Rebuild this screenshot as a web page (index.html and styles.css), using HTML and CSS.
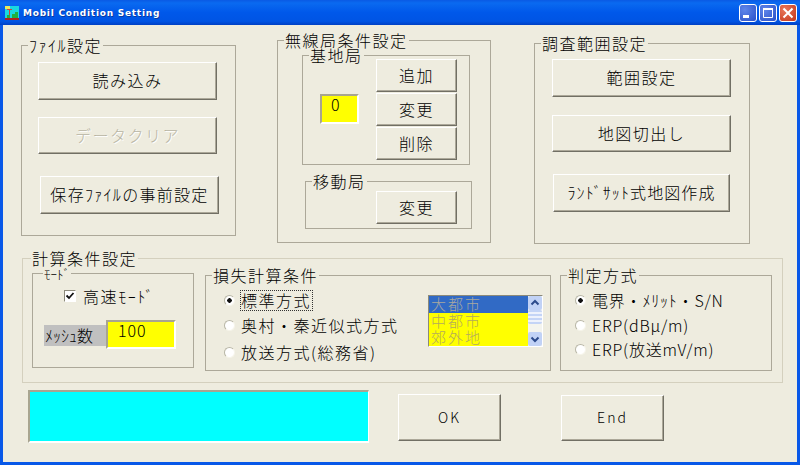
FILE: index.html
```html
<!DOCTYPE html>
<html lang="ja">
<head>
<meta charset="utf-8">
<title>Mobil Condition Setting</title>
<link rel="stylesheet" href="styles.css">
</head>
<body>
<div class="window">
  <header class="titlebar">
    <svg class="app-icon" width="14" height="14" viewBox="0 0 14 14">
      <rect width="14" height="14" fill="#19d8e0"/>
      <rect x="0" y="0" width="5" height="3" fill="#e8e860"/>
      <rect x="2" y="3" width="5" height="1" fill="#d04040"/>
      <rect x="4" y="4" width="1" height="5" fill="#d04040"/>
      <rect x="2" y="9" width="3" height="3" fill="#20b040"/>
      <rect x="7" y="8" width="3" height="4" fill="#20b040"/>
      <rect x="10" y="6" width="3" height="6" fill="#20b040"/>
      <rect x="0" y="12" width="14" height="2" fill="#b02020"/>
    </svg>
    <span class="title-text">Mobil Condition Setting</span>
    <div class="caption-buttons">
      <span class="cap cap-blue"><svg width="16" height="16" viewBox="0 0 16 16"><rect x="3" y="10" width="6" height="3" fill="#fff"/></svg></span>
      <span class="cap cap-blue"><svg width="16" height="16" viewBox="0 0 16 16"><path d="M3.5 3.5h9v9h-9z" fill="none" stroke="#fff"/><rect x="3" y="3" width="10" height="2" fill="#fff"/></svg></span>
      <span class="cap cap-red"><svg width="16" height="16" viewBox="0 0 16 16"><path d="M3.5 3.5l9 9M12.5 3.5l-9 9" stroke="#fff" stroke-width="2"/></svg></span>
    </div>
  </header>

  <main class="client">
    <div class="top-row">
      <section class="group file-group">
        <span class="legend">ﾌｧｲﾙ設定</span>
        <button class="btn btn-wide btn-read">読み込み</button>
        <button class="btn btn-wide btn-clear" disabled>データクリア</button>
        <button class="btn btn-wide btn-save">保存ﾌｧｲﾙの事前設定</button>
      </section>

      <section class="group radio-group">
        <span class="legend">無線局条件設定</span>
        <section class="group base-group">
          <span class="legend">基地局</span>
          <div class="field field-count">0</div>
          <div class="btn-stack">
            <button class="btn btn-small">追加</button>
            <button class="btn btn-small">変更</button>
            <button class="btn btn-small">削除</button>
          </div>
        </section>
        <section class="group mobile-group">
          <span class="legend">移動局</span>
          <button class="btn btn-small">変更</button>
        </section>
      </section>

      <section class="group survey-group">
        <span class="legend">調査範囲設定</span>
        <button class="btn btn-wide btn-range">範囲設定</button>
        <button class="btn btn-wide btn-cut">地図切出し</button>
        <button class="btn btn-wide btn-land">ﾗﾝﾄﾞｻｯﾄ式地図作成</button>
      </section>
    </div>

    <section class="group calc-group">
      <span class="legend">計算条件設定</span>
      <section class="group mode-group">
        <span class="legend legend-small">ﾓｰﾄﾞ</span>
        <label class="check-row"><span class="checkbox"><svg width="10" height="10" viewBox="0 0 10 10"><path d="M1.5 4.5l2.5 2.5L8.5 2" fill="none" stroke="#111" stroke-width="1.8"/></svg></span>高速ﾓｰﾄﾞ</label>
        <div class="mesh-row"><span class="mesh-label">ﾒｯｼｭ数</span><div class="field field-mesh">100</div></div>
      </section>

      <section class="group loss-group">
        <span class="legend">損失計算条件</span>
        <div class="radios loss-radios">
          <label class="radio-row"><span class="radio radio-on"></span><span class="focused">標準方式</span></label>
          <label class="radio-row"><span class="radio"></span><span>奥村・秦近似式方式</span></label>
          <label class="radio-row"><span class="radio"></span><span>放送方式(総務省)</span></label>
        </div>
        <div class="listbox">
          <ul class="list-items">
            <li class="list-selected">大都市</li>
            <li>中都市</li>
            <li>郊外地</li>
          </ul>
          <div class="scrollbar">
            <span class="sb-btn"><svg width="14" height="14" viewBox="0 0 14 14"><path d="M3.5 8.5L7 5l3.5 3.5" fill="none" stroke="#2c4a8c" stroke-width="2"/></svg></span>
            <span class="sb-thumb"></span>
            <span class="sb-btn sb-btn-end"><svg width="14" height="14" viewBox="0 0 14 14"><path d="M3.5 5.5L7 9l3.5-3.5" fill="none" stroke="#2c4a8c" stroke-width="2"/></svg></span>
          </div>
        </div>
      </section>

      <section class="group judge-group">
        <span class="legend">判定方式</span>
        <div class="radios judge-radios">
          <label class="radio-row"><span class="radio radio-on"></span><span>電界・ﾒﾘｯﾄ・S/N</span></label>
          <label class="radio-row"><span class="radio"></span><span>ERP(dBμ/m)</span></label>
          <label class="radio-row"><span class="radio"></span><span>ERP(放送mV/m)</span></label>
        </div>
      </section>
    </section>

    <div class="bottom-row">
      <div class="status-panel"></div>
      <button class="btn btn-ok">OK</button>
      <button class="btn btn-end">End</button>
    </div>
  </main>
</div>
</body>
</html>
```

FILE: styles.css
```css
* { box-sizing: border-box; }

html, body {
  margin: 0;
  padding: 0;
  width: 800px;
  height: 465px;
  overflow: hidden;
}

body {
  font-family: "Noto Sans CJK JP", "Liberation Sans", sans-serif;
  font-size: 16px;
  font-weight: 300;
  color: #000;
}

.window {
  width: 800px;
  height: 465px;
  display: flex;
  flex-direction: column;
  background: #0858e8;
  padding: 0 3px 3px;
}

.titlebar {
  height: 25px;
  margin: 0 -3px;
  padding: 0 3px 0 5px;
  display: flex;
  align-items: center;
  background: linear-gradient(180deg, #0a5ae4 0%, #0a6af0 12%, #0058ea 50%, #0054e4 85%, #0040c4 100%);
}

.app-icon { flex: none; }

.title-text {
  margin-left: 4px;
  font-family: "DejaVu Sans", sans-serif;
  font-size: 9px;
  font-weight: 700;
  letter-spacing: 0.75px;
  color: #fff;
  text-shadow: 1px 1px 0 #0a3aa0;
}

.caption-buttons {
  margin-left: auto;
  display: flex;
  gap: 2px;
}

.cap {
  width: 18px;
  height: 18px;
  border: 1px solid #fff;
  border-radius: 3px;
  display: block;
  overflow: hidden;
}

.cap svg { display: block; }

.cap-blue { background: radial-gradient(circle at 30% 30%, #5f86ea, #2a50c8); }
.cap-red { background: radial-gradient(circle at 30% 30%, #e8785a, #c4351a); }

.client {
  flex: 1;
  background: #eeecdf;
  display: flex;
  flex-direction: column;
}

.top-row {
  display: flex;
  align-items: flex-start;
  padding: 15px 0 0 18px;
  height: 218px;
}

.group {
  position: relative;
  border: 1px solid #aca899;
}

.legend {
  position: absolute;
  top: -8px;
  left: 6px;
  padding: 0 1px;
  background: #eeecdf;
  line-height: 14px;
  letter-spacing: 1.5px;
  white-space: nowrap;
}

.legend-small {
  font-size: 13px;
  letter-spacing: 0;
  left: 10px;
  top: -5px;
  line-height: 10px;
}

.file-group {
  width: 215px;
  height: 191px;
  margin-top: 5px;
  padding: 16px 0 0 16px;
}

.radio-group {
  width: 214px;
  height: 203px;
  margin-left: 41px;
  padding: 14px 0 0 24px;
}

.survey-group {
  width: 216px;
  height: 201px;
  margin-top: 3px;
  margin-left: 43px;
  padding: 15px 0 0 17px;
}

.btn {
  display: block;
  margin: 0;
  padding: 0 0 2px;
  font: inherit;
  letter-spacing: 1.5px;
  color: #000;
  background: #eeecdf;
  border: 1px solid;
  border-color: #fff #716f64 #716f64 #fff;
  box-shadow: inset -1px -1px 0 #aca899;
}

.btn:disabled {
  color: #b8b5a4;
  text-shadow: 1px 1px 0 #fff;
}

.btn-wide { width: 179px; height: 38px; }
.btn-clear { height: 37px; margin-top: 17px; }
.btn-save { margin: 22px 0 0 2px; letter-spacing: 1.3px; }
.btn-cut { height: 37px; margin-top: 18px; }
.btn-land { width: 177px; margin: 22px 0 0 1px; letter-spacing: 1.1px; }

.base-group {
  width: 168px;
  height: 110px;
  padding: 3px 0 0 17px;
  display: flex;
  align-items: flex-start;
}

.field {
  background: #ffff00;
  border: 2px solid;
  border-color: #a8a590 #fff #fff #a8a590;
  line-height: 16px;
}

.field-count {
  width: 39px;
  height: 30px;
  margin-top: 35px;
  padding-left: 9px;
}

.btn-stack {
  margin-left: 17px;
  display: flex;
  flex-direction: column;
  gap: 1px;
}

.btn-small { width: 81px; height: 33px; }

.mobile-group {
  width: 167px;
  height: 48px;
  margin: 16px 0 0 3px;
  padding: 9px 0 0 70px;
}

.calc-group {
  width: 761px;
  height: 125px;
  margin: 15px 0 0 19px;
  border-color: #d4d0be;
  padding: 14px 0 0 9px;
  display: flex;
  align-items: flex-start;
}

.calc-group > .legend { left: 8px; }

.mode-group {
  width: 162px;
  height: 95px;
  padding: 10px 0 0 11px;
}

.check-row {
  display: flex;
  align-items: center;
  margin-left: 20px;
  letter-spacing: 1.6px;
}

.checkbox {
  width: 12px;
  height: 12px;
  margin-right: 7px;
  background: #fff;
  border: 1px solid;
  border-color: #8c8a7a #fff #fff #8c8a7a;
  display: block;
  flex: none;
}

.checkbox svg { display: block; }

.mesh-row {
  display: flex;
  align-items: flex-end;
  margin-top: 12px;
}

.mesh-label {
  width: 62px;
  height: 21px;
  margin-bottom: 3px;
  padding-left: 1px;
  background: #c0c0c0;
  line-height: 21px;
  white-space: nowrap;
  flex: none;
}

.field-mesh {
  width: 70px;
  height: 29px;
  padding-left: 10px;
  letter-spacing: 1px;
}

.loss-group {
  width: 346px;
  height: 96px;
  margin: 2px 0 0 11px;
  display: flex;
  align-items: flex-start;
}

.radios {
  display: grid;
  letter-spacing: 1.5px;
}

.loss-radios {
  padding: 12px 0 0 18px;
  grid-template-rows: 25px 27px 25px;
  width: 222px;
  flex: none;
}

.judge-radios {
  padding: 12px 0 0 14px;
  grid-template-rows: 25px 24px 25px;
  letter-spacing: 0.8px;
}

.radio-row {
  display: flex;
  align-items: center;
  white-space: nowrap;
  height: 24px;
}

.radio {
  width: 11px;
  height: 11px;
  margin-right: 6px;
  border-radius: 50%;
  background: #fff;
  border: 1px solid;
  border-color: #b8b6a6 #f6f4ea #f6f4ea #b8b6a6;
  flex: none;
  display: block;
}

.radio-on { background: radial-gradient(circle, #111 0 2px, #fff 2.5px); }

.focused {
  outline: 1px dotted #333;
  padding: 0 1px 0 0;
  line-height: 19px;
}

.listbox {
  width: 115px;
  height: 52px;
  margin: 19px 0 0 0;
  display: flex;
  background: #ffff00;
  border: 1px solid;
  border-color: #8c8a7a #fff #fff #8c8a7a;
}

.list-items {
  flex: 1;
  margin: 0;
  padding: 0;
  list-style: none;
  color: #b4ac5c;
  font-size: 15px;
  letter-spacing: 2px;
  line-height: 16.6px;
  overflow: hidden;
}

.list-items li { padding-left: 2px; }

.list-selected {
  background: #316ac5;
  color: #a8a8a0;
}

.scrollbar {
  width: 14px;
  flex: none;
  background: #f4f4ee;
  display: flex;
  flex-direction: column;
}

.sb-btn {
  height: 14px;
  display: block;
  background: #c1d2f6;
  border-radius: 2px;
}

.sb-btn-end { margin-top: auto; }

.sb-btn svg { display: block; }

.sb-thumb {
  height: 14px;
  background: repeating-linear-gradient(180deg, #c4d4f6 0 2px, #eef2fc 2px 4px);
  border-radius: 2px;
}

.judge-group {
  width: 212px;
  height: 96px;
  margin: 2px 0 0 9px;
}

.bottom-row {
  display: flex;
  align-items: flex-start;
  padding: 7px 0 0 25px;
}

.status-panel {
  width: 341px;
  height: 53px;
  background: #00ffff;
  border-style: solid;
  border-width: 2px 1px 2px 2px;
  border-color: #a8a590 #fff #fff #a8a590;
}

.btn-ok {
  width: 103px;
  height: 47px;
  margin: 4px 0 0 29px;
  font-size: 14px;
  letter-spacing: 2px;
}

.btn-end {
  width: 103px;
  height: 46px;
  margin: 5px 0 0 60px;
  font-size: 14px;
  letter-spacing: 2px;
}
```
